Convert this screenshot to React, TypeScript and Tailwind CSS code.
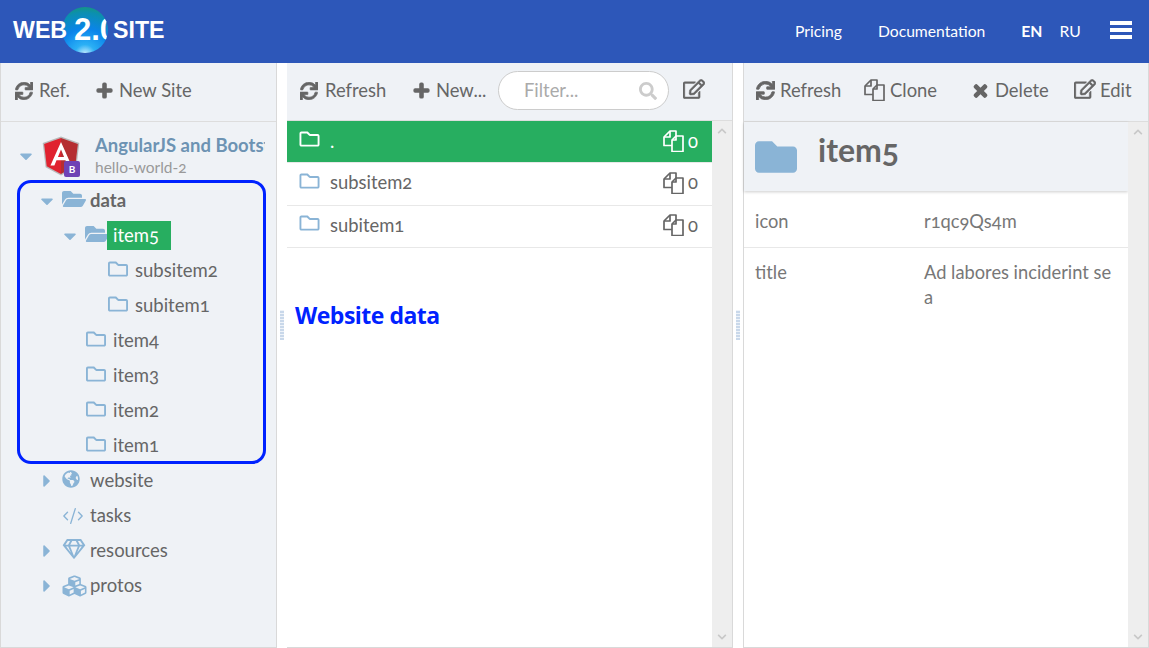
import type { ReactNode } from 'react'
import { FaCaretDown, FaCaretRight, FaChevronDown, FaChevronUp, FaCubes, FaFolder, FaFolderOpen, FaGlobeAmericas, FaPlus, FaRegEdit, FaRegFolder, FaRegGem, FaSearch, FaSync, FaTimes } from 'react-icons/fa'
import { CodeXml } from 'lucide-react'

function FilesIcon({ className }: { className?: string }) {
  return (
    <svg viewBox="2 1 21 22" fill="none" stroke="currentColor" strokeWidth="1.7" strokeLinejoin="round" className={className}>
      <path d="M15 7V2H9L3 8v8.5h8" />
      <path d="M9 2v6H3" />
      <path d="M15 7h7v15.5H11V11z" />
      <path d="M15 7v4h-4" />
    </svg>
  )
}

function AngularLogo() {
  return (
    <svg viewBox="20 20 210 220" className="w-[38px] h-[40px]">
      <polygon points="125,22 24,58 40,192 125,238 210,192 226,58" fill="#b9b9b9" />
      <polygon points="125,30 31.9,63.2 46.1,186.3 125,230" fill="#e0222f" />
      <polygon points="125,30 125,230 203.9,186.3 218.1,63.2" fill="#b52e31" />
      <path d="M125,52.1L66.8,182.6h21.7l11.7-29.2h49.4l11.7,29.2h21.7L125,52.1z M142,135.4H108l17-40.9L142,135.4z" fill="#fff" />
    </svg>
  )
}

function ToolButton({ icon, label, className }: { icon: ReactNode; label: string; className?: string }) {
  return (
    <div className={`flex items-center text-[#666] text-[18.4px] shrink-0 ${className ?? ''}`}>
      {icon}
      <span>{label}</span>
    </div>
  )
}

function Scrollbar() {
  return (
    <div className="w-[20px] shrink-0 bg-[#eeeeee] flex flex-col justify-between items-center py-[5px] text-[#c8c8c8]">
      <FaChevronUp className="w-[10px] h-[10px]" />
      <FaChevronDown className="w-[10px] h-[10px]" />
    </div>
  )
}

function Splitter() {
  return (
    <div className="w-[10px] shrink-0 bg-white flex items-center justify-center pb-[62px]">
      <div className="w-[4px] h-[30px] bg-[repeating-linear-gradient(0deg,#c9d8ea_0,#c9d8ea_2px,#eef3f9_2px,#eef3f9_3px)]" />
    </div>
  )
}

function TreeRow({ pad, caret, icon, label, bold, active }: { pad: string; caret?: 'down' | 'right'; icon: ReactNode; label: string; bold?: boolean; active?: boolean }) {
  return (
    <div className={`h-[35px] flex items-center text-[18.5px] ${pad}`}>
      <div className="w-[22px] h-[22px] shrink-0 flex items-center text-[#8ab4d6]">
        {caret === 'down' && <FaCaretDown className="w-[20px] h-[20px] -ml-[3px] shrink-0" />}
        {caret === 'right' && <FaCaretRight className="w-[20px] h-[20px] -ml-[3px] shrink-0" />}
      </div>
      <div className="w-[22px] shrink-0 flex items-center text-[#8ab4d6]">{icon}</div>
      <span className={`pl-[6px] leading-[29px] ${active ? 'pr-[12px] bg-[#27ae60] text-white' : 'pr-[6px] text-[#666]'} ${bold ? 'font-bold' : ''}`}>{label}</span>
    </div>
  )
}

const outlineFolder = <FaRegFolder className="w-[22px] h-[20px] shrink-0 -mt-[4px]" />
const openFolder = <FaFolderOpen className="w-[24px] h-[22px] shrink-0 -mt-[4px]" />

function ListRow({ label, active, height }: { label: string; active?: boolean; height: string }) {
  return (
    <div className={`flex items-center pl-[12px] pr-[14px] border-b border-[#e8e8e8] text-[18.4px] ${height} ${active ? 'bg-[#27ae60] text-white' : 'text-[#666] pb-[2px]'}`}>
      <FaRegFolder className={`w-[21px] h-[20px] -mt-[5px] ${active ? 'text-white' : 'text-[#8ab4d6]'}`} />
      <span className="ml-[10px] flex-1">{label}</span>
      <FilesIcon className="w-[21px] h-[22px] -mt-[1px]" />
      <span className="ml-[4px]">0</span>
    </div>
  )
}

export default function App() {
  return (
    <div className="w-[1149px] h-[648px] overflow-hidden flex flex-col bg-white oldstyle-nums font-['Lato','Open_Sans',sans-serif]">
      <header className="h-[63px] shrink-0 bg-[#2d57b9] flex items-center text-white text-[15.7px]">
        <div className="relative w-[200px] h-[63px] font-['Liberation_Sans',sans-serif] font-bold">
          <div className="absolute left-[62px] top-[7px] w-[46px] h-[46px] rounded-full overflow-hidden bg-[radial-gradient(circle_at_50%_105%,#dff6ff_0,#2bb0f5_20%,#0a84ea_50%,#0b8fb0_80%,#1d9a5e_100%)]">
            <span className="absolute left-[12px] top-[5px] text-[31px] leading-[36px] whitespace-nowrap">2.0</span>
          </div>
          <span className="absolute left-[13px] top-[16px] text-[23.2px] leading-[28px]">WEB</span>
          <span className="absolute left-[113px] top-[16px] text-[23.2px] leading-[28px]">SITE</span>
        </div>
        <span className="ml-[595px]">Pricing</span>
        <span className="ml-[36px]">Documentation</span>
        <span className="ml-[36px] font-bold">EN</span>
        <span className="ml-[17px]">RU</span>
        <div className="ml-[29px] w-[22px] h-[18px] -mt-[4px] flex flex-col justify-between">
          <div className="h-[4px] bg-white" />
          <div className="h-[4px] bg-white" />
          <div className="h-[4px] bg-white" />
        </div>
      </header>

      <div className="flex-1 flex min-h-0">
        <aside className="relative w-[277px] shrink-0 bg-[#eff2f6] border-x border-[#d9d9d9] border-b flex flex-col">
          <div className="h-[59px] shrink-0 flex items-center border-b border-[#dddddd] pl-[14px] pb-[2px]">
            <ToolButton icon={<FaSync className="w-[18px] h-[18px] mr-[6px]" stroke="currentColor" strokeWidth={20} />} label="Ref." className="w-[81px]" />
            <ToolButton icon={<FaPlus className="w-[17px] h-[17px] mr-[6px]" stroke="currentColor" strokeWidth={40} />} label="New Site" />
          </div>
          <div className="flex-1 min-h-0">
            <div className="h-[61px] flex items-center pl-[18px]">
              <FaCaretDown className="w-[20px] h-[20px] -ml-[3px] text-[#8ab4d6] shrink-0 mt-[6px]" />
              <div className="relative ml-[6px] mt-[6px] shrink-0">
                <AngularLogo />
                <span className="absolute left-[22px] top-[25px] w-[16px] h-[16px] rounded-[2px] bg-[#6f42b5] text-white text-[10px] font-bold leading-[16px] text-center">B</span>
              </div>
              <div className="ml-[15px] w-[170px] overflow-hidden whitespace-nowrap leading-none mt-[4px]">
                <div className="text-[18.5px] font-bold text-[#6d93b3] leading-[24px]">AngularJS and Bootstrap</div>
                <div className="text-[15.5px] text-[#999] leading-[20px]">hello-world-2</div>
              </div>
            </div>
            <TreeRow pad="pl-[39px]" caret="down" icon={openFolder} label="data" bold />
            <TreeRow pad="pl-[62px]" caret="down" icon={openFolder} label="item5" active />
            <TreeRow pad="pl-[84px]" icon={outlineFolder} label="subsitem2" />
            <TreeRow pad="pl-[84px]" icon={outlineFolder} label="subitem1" />
            <TreeRow pad="pl-[62px]" icon={outlineFolder} label="item4" />
            <TreeRow pad="pl-[62px]" icon={outlineFolder} label="item3" />
            <TreeRow pad="pl-[62px]" icon={outlineFolder} label="item2" />
            <TreeRow pad="pl-[62px]" icon={outlineFolder} label="item1" />
            <TreeRow pad="pl-[39px]" caret="right" icon={<FaGlobeAmericas className="w-[18px] h-[18px] -mt-[3px]" />} label="website" />
            <TreeRow pad="pl-[39px]" icon={<CodeXml className="w-[22px] h-[22px] shrink-0" strokeWidth={1.5} />} label="tasks" />
            <TreeRow pad="pl-[39px]" caret="right" icon={<FaRegGem className="w-[24px] h-[20px] shrink-0 -mt-[3px]" />} label="resources" />
            <TreeRow pad="pl-[39px]" caret="right" icon={<FaCubes className="w-[27px] h-[24px] shrink-0 -ml-[1px]" />} label="protos" />
          </div>
          <div className="absolute left-[16px] top-[117px] w-[249px] h-[284px] rounded-[14px] border-[3px] border-[#0022ff] pointer-events-none" />
        </aside>

        <Splitter />

        <section className="w-[446px] shrink-0 border-r border-b border-[#d9d9d9] flex flex-col">
          <div className="h-[58px] shrink-0 bg-[#eff2f6] border-b border-[#dddddd] flex items-center pl-[13px] pb-[2px]">
            <ToolButton icon={<FaSync className="w-[18px] h-[18px] mr-[7px]" stroke="currentColor" strokeWidth={20} />} label="Refresh" className="w-[113px] mt-[1px]" />
            <ToolButton icon={<FaPlus className="w-[17px] h-[17px] mr-[6px]" stroke="currentColor" strokeWidth={40} />} label="New..." className="w-[85px] mt-[1px]" />
            <div className="w-[171px] h-[39px] rounded-full bg-white border border-[#cccccc] flex items-center justify-between pl-[25px] pr-[11px] text-[18.4px] text-[#aaa]">
              <span>Filter...</span>
              <FaSearch className="w-[18px] h-[18px] text-[#cccccc]" />
            </div>
            <FaRegEdit className="ml-[14px] w-[22px] h-[20px] text-[#666] -mt-[4px]" stroke="currentColor" strokeWidth={10} />
          </div>
          <div className="flex-1 flex min-h-0">
            <div className="flex-1 min-w-0">
              <ListRow label="." active height="h-[42px]" />
              <ListRow label="subsitem2" height="h-[43px]" />
              <ListRow label="subitem1" height="h-[42px]" />
              <div className="mt-[49px] pl-[8px] text-[23px] leading-[36px] font-bold text-[#0022ff] font-['Open_Sans',sans-serif] tracking-[-0.5px]">Website data</div>
            </div>
            <Scrollbar />
          </div>
        </section>

        <Splitter />

        <section className="flex-1 min-w-0 border-x border-b border-[#d9d9d9] flex flex-col">
          <div className="h-[59px] shrink-0 bg-[#eff2f6] border-b border-[#dddddd] flex items-center pl-[12px] pb-[2px]">
            <ToolButton icon={<FaSync className="w-[19px] h-[19px] mr-[5px]" stroke="currentColor" strokeWidth={20} />} label="Refresh" className="w-[108px]" />
            <ToolButton icon={<FilesIcon className="w-[21px] h-[22px] mr-[5px] -mt-[2px]" />} label="Clone" className="w-[108px]" />
            <ToolButton icon={<FaTimes className="w-[17px] h-[18px] mr-[6px]" stroke="currentColor" strokeWidth={40} />} label="Delete" className="w-[102px]" />
            <ToolButton icon={<FaRegEdit className="w-[22px] h-[20px] mr-[4px] -mt-[3px]" stroke="currentColor" strokeWidth={10} />} label="Edit" />
          </div>
          <div className="flex-1 flex min-h-0">
            <div className="flex-1 min-w-0">
              <div className="h-[69px] bg-[#eff2f6] flex items-center pl-[11px] shadow-[0_1px_3px_rgba(0,0,0,0.2)]">
                <FaFolder className="w-[42px] h-[42px] text-[#8ab4d6]" />
                <span className="ml-[21px] text-[32px] font-bold text-[#666] -mt-[14px]">item5</span>
              </div>
              <div className="h-[57px] flex items-center border-b border-[#e8e8e8] pl-[11px] pt-[6px] text-[18.3px] text-[#777]">
                <span className="w-[169px] shrink-0">icon</span>
                <span>r1qc9Qs4m</span>
              </div>
              <div className="flex pl-[11px] pt-[12px] text-[18.3px] leading-[25px] text-[#777]">
                <span className="w-[169px] shrink-0">title</span>
                <span className="w-[192px]">Ad labores inciderint se a</span>
              </div>
            </div>
            <Scrollbar />
          </div>
        </section>
      </div>
    </div>
  )
}
